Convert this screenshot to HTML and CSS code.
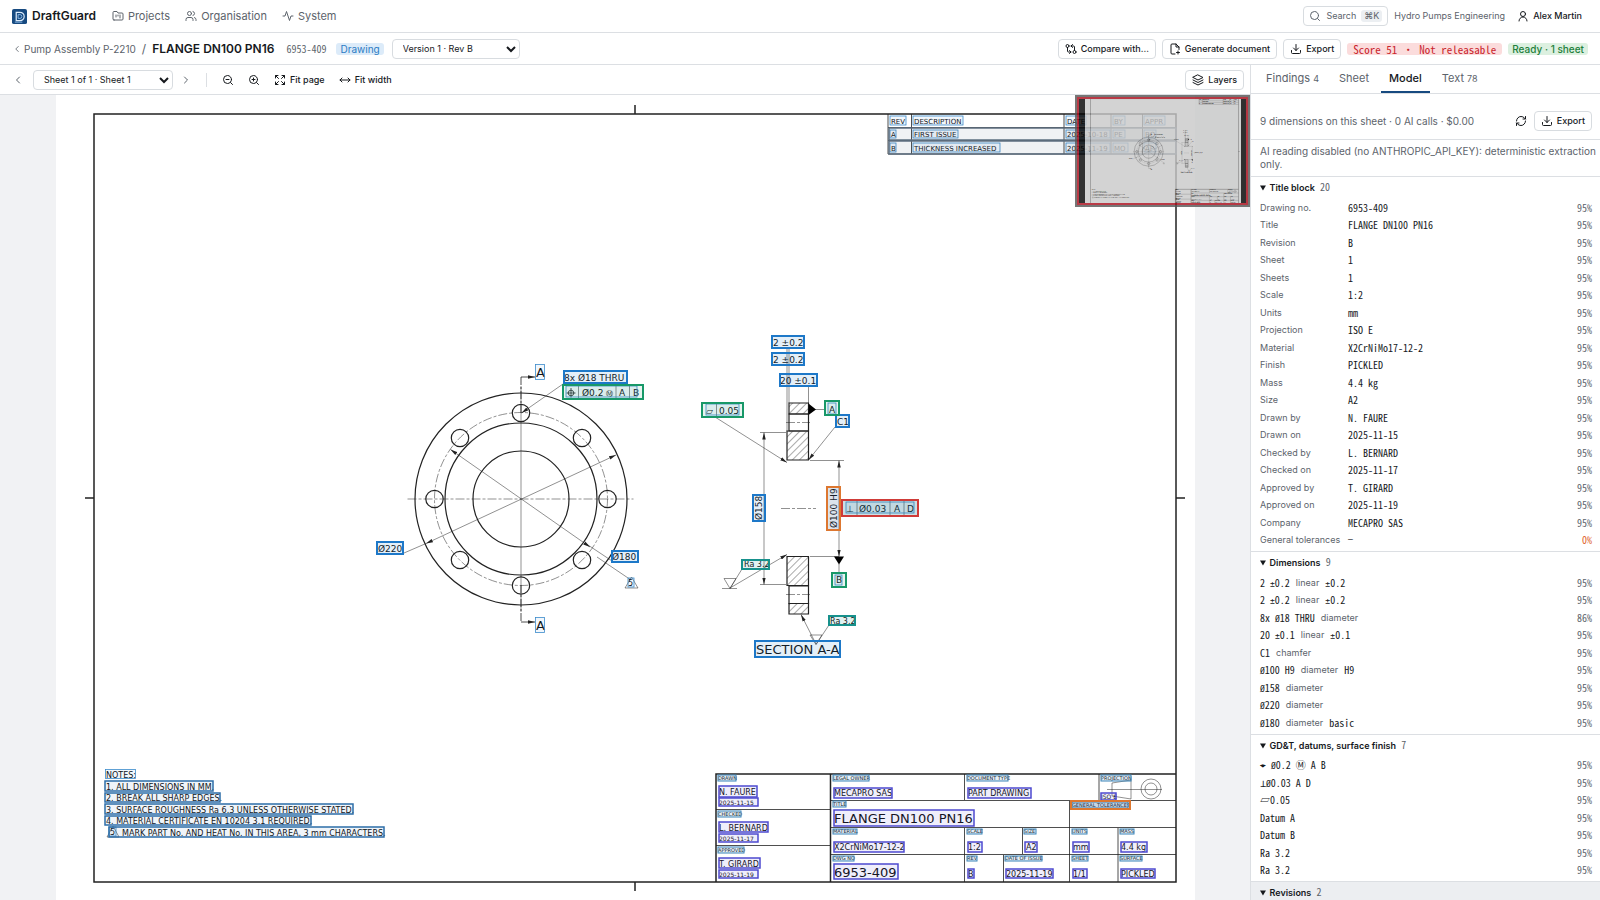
FILE: index.html
```html
<!DOCTYPE html>
<html lang="en">
<head>
<meta charset="utf-8">
<title>DraftGuard – FLANGE DN100 PN16</title>
<link rel="stylesheet" href="styles.css">
</head>
<body>
<header class="topbar">
  <a class="brand" href="#">
    <svg class="logo" viewBox="0 0 16 16"><rect width="16" height="16" rx="2" fill="#174a80"/><path d="M4.500 3.500h4a4.500 4.500 0 0 1 0 9h-4z" fill="none" stroke="#dcebfa" stroke-width="1.300"/><path d="M6.500 6h2a2 2 0 0 1 0 4h-2zM3 14h8" fill="none" stroke="#8dbbe8"/></svg>
    DraftGuard</a>
  <nav class="mainnav">
    <a href="#"><svg class="icon" viewBox="0 0 24 24"><path d="M4 20h16a2 2 0 0 0 2-2V8a2 2 0 0 0-2-2h-8l-2-3H4a2 2 0 0 0-2 2v13a2 2 0 0 0 2 2zM8 10v4M12 10v2M16 10v6"/></svg>Projects</a>
    <a href="#"><svg class="icon" viewBox="0 0 24 24"><path d="M16 21v-2a4 4 0 0 0-4-4H6a4 4 0 0 0-4 4v2M22 21v-2a4 4 0 0 0-3-3.900M16 3.100a4 4 0 0 1 0 7.800"/><circle cx="9" cy="7" r="4"/></svg>Organisation</a>
    <a href="#"><svg class="icon" viewBox="0 0 24 24"><path d="M22 12h-4l-3 9L9 3l-3 9H2"/></svg>System</a>
  </nav>
  <div class="account">
    <button class="btn search"><svg class="icon" viewBox="0 0 24 24"><circle cx="11" cy="11" r="8"/><path d="m21 21-4-4"/></svg>Search <kbd>⌘K</kbd></button>
    <span class="org">Hydro Pumps Engineering</span>
    <button class="user"><svg class="icon" viewBox="0 0 24 24"><circle cx="12" cy="8" r="5"/><path d="M4 22a8 8 0 0 1 16 0"/></svg>Alex Martin</button>
  </div>
</header>
<div class="docbar">
  <a class="back" href="#"><svg class="icon small" viewBox="0 0 24 24"><path d="m15 18-6-6 6-6"/></svg>Pump Assembly P-2210</a>
  <span class="slash">/</span>
  <h1>FLANGE DN100 PN16</h1>
  <span class="mono number">6953-409</span>
  <span class="badge blue">Drawing</span>
  <select class="version" aria-label="Version"><option>Version 1 · Rev B</option></select>
  <div class="docactions">
    <button class="btn"><svg class="icon" viewBox="0 0 24 24"><circle cx="5" cy="6" r="3"/><circle cx="19" cy="18" r="3"/><path d="M12 6h5a2 2 0 0 1 2 2v7M15 9l-3-3 3-3M12 18H7a2 2 0 0 1-2-2V9M9 15l3 3-3 3"/></svg>Compare with…</button>
    <button class="btn"><svg class="icon" viewBox="0 0 24 24"><path d="M12 22H6a2 2 0 0 1-2-2V4a2 2 0 0 1 2-2h8l6 6v5M14 2v6h6M18 16v6M15 19h6"/></svg>Generate document</button>
    <button class="btn"><svg class="icon" viewBox="0 0 24 24"><path d="M21 15v4a2 2 0 0 1-2 2H5a2 2 0 0 1-2-2v-4M7 10l5 5 5-5M12 15V3"/></svg>Export</button>
    <span class="badge red mono">Score 51 · Not releasable</span>
    <span class="badge green">Ready · 1 sheet</span>
  </div>
</div>
<main class="workspace">
  <section class="viewer">
    <div class="toolbar">
      <button class="ghost muted" aria-label="Previous sheet"><svg class="icon" viewBox="0 0 24 24"><path d="m15 18-6-6 6-6"/></svg></button>
      <select class="sheet" aria-label="Sheet"><option>Sheet 1 of 1 · Sheet 1</option></select>
      <button class="ghost muted" aria-label="Next sheet"><svg class="icon" viewBox="0 0 24 24"><path d="m9 18 6-6-6-6"/></svg></button>
      <span class="sep"></span>
      <button class="ghost zoom" aria-label="Zoom out"><svg class="icon" viewBox="0 0 24 24"><circle cx="11" cy="11" r="8"/><path d="m21 21-4-4M8 11h6"/></svg></button>
      <button class="ghost zoom" aria-label="Zoom in"><svg class="icon" viewBox="0 0 24 24"><circle cx="11" cy="11" r="8"/><path d="m21 21-4-4M8 11h6M11 8v6"/></svg></button>
      <button class="ghost"><svg class="icon" viewBox="0 0 24 24"><path d="m15 15 6 6M15 9l6-6M21 16v5h-5M21 8V3h-5M3 16v5h5M3 21l6-6M3 8V3h5M9 9 3 3"/></svg>Fit page</button>
      <button class="ghost"><svg class="icon" viewBox="0 0 24 24"><path d="m18 8 4 4-4 4M2 12h20M6 8l-4 4 4 4"/></svg>Fit width</button>
      <button class="btn layers"><svg class="icon" viewBox="0 0 24 24"><path d="m12 2 10 5-10 5L2 7zM2 12l10 5 10-5M2 17l10 5 10-5"/></svg>Layers</button>
    </div>
    <div class="canvas">
      <svg class="drawing" viewBox="0 95 1250 805" preserveAspectRatio="xMidYMin meet">
        <defs>
          <pattern id="hatch" width="5" height="5" patternUnits="userSpaceOnUse" patternTransform="rotate(45)"><path d="M0 0V5" stroke="#555" stroke-width="1"/></pattern>
          <marker id="tip" viewBox="0 0 8 4" refX="8" refY="2" markerWidth="7" markerHeight="4" markerUnits="userSpaceOnUse" orient="auto-start-reverse"><path d="M0 0 8 2 0 4z" fill="#222"/></marker>
        </defs>
        <rect x="56" y="95" width="1139" height="805" fill="#fff"/>
        <g id="plan">
          <g class="ln frame"><rect x="94" y="114" width="1082" height="768"/><path d="M635 105v9M635 882v9M85 498h9M1176 498h9"/></g>
          <!-- revision table -->
          <g class="ln mid"><path d="M888 114v40h288M888 127.500h288M888 140.500h288M911.500 114v40M1064 114v40M1111 114v40M1142.500 114v40"/></g>
          <g class="t7">
            <text x="891" y="124">REV</text><text x="914" y="124">DESCRIPTION</text><text x="1067" y="124">DATE</text><text x="1114" y="124">BY</text><text x="1145" y="124">APPR</text>
            <text x="891" y="137">A</text><text x="914" y="137">FIRST ISSUE</text><text x="1067" y="137">2025-10-18</text><text x="1114" y="137">PE</text><text x="1145" y="137">BO</text>
            <text x="891" y="151">B</text><text x="914" y="151">THICKNESS INCREASED</text><text x="1067" y="151">2025-11-19</text><text x="1114" y="151">MO</text><text x="1145" y="151">AP</text>
          </g>
          <!-- front view -->
          <g class="ln part"><circle cx="521" cy="499" r="106"/><circle cx="521" cy="499" r="76"/><circle cx="521" cy="499" r="48"/>
            <circle cx="521" cy="413" r="8.700"/><circle cx="582" cy="438" r="8.700"/><circle cx="607.500" cy="499" r="8.700"/><circle cx="582" cy="560" r="8.700"/><circle cx="521" cy="585.500" r="8.700"/><circle cx="460" cy="560" r="8.700"/><circle cx="434.500" cy="499" r="8.700"/><circle cx="460" cy="438" r="8.700"/></g>
          <g class="ln thin"><circle class="dash" cx="521" cy="499" r="86.500"/><path class="dash" d="M407.500 499h226"/><path d="M521 386v226"/>
            <path marker-end="url(#tip)" d="M563 384 521.500 413"/><path d="M404 553l22-9.500"/><path marker-start="url(#tip)" marker-end="url(#tip)" d="M426 543.500 616 455"/><path marker-start="url(#tip)" marker-end="url(#tip)" d="M450.500 449.500 590 547"/><path d="M585 543l27 18M597 557l34 23"/><path d="m631.500 577 6.500 11h-13z"/></g>
          <g class="ln mid"><path stroke-dasharray="8 2 2 2" d="M521 377v36M521 585v37"/><path marker-end="url(#tip)" d="M521 377h14"/><path marker-end="url(#tip)" d="M521 622h14"/></g>
          <!-- section view -->
          <g class="ln part"><path fill="url(#hatch)" d="M789 403h19.500v11H789z"/><path d="M789 414h19.500v17H789z"/><path fill="url(#hatch)" d="M787 431h21.500v29H787zM787 556.500h21.500v29H787z"/><path d="M789 586h19.500v17.500H789z"/><path fill="url(#hatch)" d="M789 603.500h19.500V614H789z"/></g>
          <g class="ln thin"><path d="M787 347v84M789 347v56M808.500 386v17M760 432.500h26M760 584.500h26M810 460.500h34M810 556.500h29M815 409.500h10M839 564v8"/>
            <path class="dash" d="M786 422.500h24M786 594.500h24M781 508.500h35"/>
            <path marker-start="url(#tip)" marker-end="url(#tip)" d="M764 432.500v152"/><path marker-start="url(#tip)" marker-end="url(#tip)" d="M839 460.500v96"/>
            <path marker-end="url(#tip)" d="M835 427 808.500 460"/><path marker-end="url(#tip)" d="M715 417 787 462.500"/><path marker-end="url(#tip)" d="M730 588 787 554.500"/><path marker-end="url(#tip)" d="M816 644 801 614.500"/>
            <path d="M742 569l-12 19.500-6-10h12l-6 10M722 588.500h15M829 625l-13 19.500-6-9.500h12l-6 9.500"/></g>
          <path d="M808.500 403.500v11.500l7.500-5.500zM834 556.500h10l-5 8z"/>
          <g class="t9">
            <text x="564" y="381">8x Ø18 THRU</text><text x="378" y="552">Ø220</text><text x="612" y="560">Ø180</text>
            <text x="582" y="396">Ø0.2</text><text x="606" y="396" class="t7">Ⓜ</text><text x="619" y="396">A</text><text x="633" y="396">B</text>
            <text x="773" y="346">2 ±0.2</text><text x="773" y="363">2 ±0.2</text><text x="780" y="384">20 ±0.1</text>
            <text x="829" y="413">A</text><text x="837" y="425">C1</text><text x="706" y="414">▱</text><text x="719" y="414">0.05</text>
            <text x="846" y="512">⊥</text><text x="859" y="512">Ø0.03</text><text x="894" y="512">A</text><text x="907" y="512">D</text><text x="836" y="583">B</text>
            <text transform="translate(762 520) rotate(-90)">Ø158</text><text transform="translate(837 528) rotate(-90)">Ø100 H9</text>
          </g>
          <g class="ln mid"><circle cx="571" cy="393" r="2.800"/><path d="M571 388v9.500M566.500 393h9"/></g>
          <g class="ln thin"><path d="M578.500 386v12M616 386v12M629.500 386v12M716.500 404v12M857 501v14M890 501v14M904 501v14"/></g>
          <g class="t8"><text x="744" y="567">Ra 3.2</text><text x="830" y="624">Ra 3.2</text><text x="628" y="586">5</text></g>
          <g class="t13"><text x="536" y="377">A</text><text x="536" y="630">A</text><text x="756" y="654">SECTION A-A</text><text x="834" y="823">FLANGE DN100 PN16</text><text x="834" y="877">6953-409</text></g>
          <!-- notes -->
          <g class="t8">
            <text x="106" y="778">NOTES:</text><text x="106" y="790">1. ALL DIMENSIONS IN MM.</text><text x="106" y="801">2. BREAK ALL SHARP EDGES.</text><text x="106" y="813">3. SURFACE ROUGHNESS Ra 6.3 UNLESS OTHERWISE STATED.</text><text x="106" y="824">4. MATERIAL CERTIFICATE EN 10204 3.1 REQUIRED.</text><text x="122" y="836">MARK PART No. AND HEAT No. IN THIS AREA, 3 mm CHARACTERS.</text><text x="110" y="835">5</text>
          </g>
          <path class="ln thin" d="m113 826 6 11h-12z"/>
          <!-- title block -->
          <g class="ln frame"><path d="M716 882V774h460M830.500 774v108"/></g>
          <g class="ln mid"><path d="M716 809.500h114M716 845.500h114M830 800.500h346M830 827.500h346M830 854.500h346M964.500 774v26M964.500 828v54M1099 774v26M1069.500 801v81M1022.500 828v26M1003.500 855v27M1118 828v54"/></g>
          <g class="ln thin"><path d="M1112 783v13l19 3v-19zM1107 789.500h55"/><circle cx="1151" cy="789" r="10"/><circle cx="1151" cy="789" r="6"/></g>
          <g class="t5">
            <text x="718" y="780">DRAWN</text><text x="718" y="816">CHECKED</text><text x="718" y="852">APPROVED</text>
            <text x="833" y="780">LEGAL OWNER</text><text x="833" y="806">TITLE</text><text x="833" y="833">MATERIAL</text><text x="833" y="860">DWG NO</text>
            <text x="967" y="780">DOCUMENT TYPE</text><text x="1101" y="780">PROJECTION</text><text x="1072" y="807">GENERAL TOLERANCES</text>
            <text x="967" y="833">SCALE</text><text x="1024" y="833">SIZE</text><text x="1072" y="833">UNITS</text><text x="1120" y="833">MASS</text>
            <text x="967" y="860">REV</text><text x="1005" y="860">DATE OF ISSUE</text><text x="1072" y="860">SHEET</text><text x="1120" y="860">SURFACE</text>
          </g>
          <g class="t6"><text x="719" y="805">2025-11-15</text><text x="719" y="841">2025-11-17</text><text x="719" y="877">2025-11-19</text><text x="1101" y="799">ISO E</text></g>
          <g class="t8">
            <text x="719" y="795">N. FAURE</text><text x="719" y="831">L. BERNARD</text><text x="719" y="867">T. GIRARD</text>
            <text x="834" y="796">MECAPRO SAS</text><text x="834" y="850">X2CrNiMo17-12-2</text><text x="968" y="796">PART DRAWING</text>
            <text x="968" y="850">1:2</text><text x="1026" y="850">A2</text><text x="1073" y="850">mm</text><text x="1121" y="850">4.4 kg</text>
            <text x="968" y="877">B</text><text x="1006" y="877">2025-11-19</text><text x="1073" y="877">1/1</text><text x="1121" y="877">PICKLED</text>
          </g>
        </g>
        <!-- recognised text -->
        <g class="word">
          <rect x="890" y="116" width="16" height="9"/><rect x="913" y="116" width="50" height="9"/><rect x="1066" y="116" width="20" height="9"/><rect x="1113" y="116" width="12" height="9"/><rect x="1144" y="116" width="21" height="9"/>
          <rect x="890" y="130" width="6" height="8"/><rect x="913" y="130" width="45" height="8"/><rect x="1066" y="130" width="44" height="8"/><rect x="1113" y="130" width="12" height="8"/><rect x="1144" y="130" width="12" height="8"/>
          <rect x="890" y="143" width="6" height="9"/><rect x="913" y="143" width="87" height="9"/><rect x="1066" y="143" width="44" height="9"/><rect x="1113" y="143" width="15" height="9"/><rect x="1144" y="143" width="12" height="9"/>
          <rect x="535.500" y="364.500" width="9" height="15"/><rect x="535.500" y="617.500" width="9" height="15"/>
          <rect x="628" y="578" width="6" height="9"/><rect x="105.500" y="769.500" width="30" height="9"/><rect x="566" y="386" width="71" height="11"/><rect x="846" y="502" width="68" height="11"/><rect x="706" y="404" width="33" height="11"/><rect x="828" y="403" width="8" height="11"/><rect x="835" y="575" width="7" height="10"/><rect x="109" y="827" width="7" height="9"/>
        </g>
        <g class="label">
          <rect x="718" y="775" width="18" height="6"/><rect x="718" y="811" width="23" height="6"/><rect x="718" y="847" width="26" height="6"/><rect x="833" y="775" width="36" height="6"/><rect x="833" y="801" width="13" height="6"/><rect x="833" y="829" width="24" height="5"/><rect x="833" y="856" width="21" height="5"/>
          <rect x="967" y="775" width="41" height="6"/><rect x="1101" y="775" width="30" height="6"/><rect x="1072" y="802" width="56" height="6"/><rect x="967" y="829" width="15" height="5"/><rect x="1024" y="829" width="12" height="5"/><rect x="1072" y="829" width="15" height="5"/><rect x="1120" y="829" width="14" height="5"/>
          <rect x="967" y="856" width="10" height="5"/><rect x="1005" y="856" width="37" height="5"/><rect x="1072" y="856" width="16" height="5"/><rect x="1120" y="856" width="22" height="5"/>
        </g>
        <!-- extracted features -->
        <g class="revrow"><rect x="889" y="128" width="287" height="12"/><rect x="889" y="141" width="287" height="13"/></g>
        <g class="note"><rect x="105" y="781" width="108" height="10"/><rect x="105" y="793" width="115" height="9"/><rect x="105" y="804" width="248" height="10"/><rect x="105" y="816" width="206" height="9"/><rect x="109" y="827" width="275" height="10"/></g>
        <g class="dim">
          <rect x="564" y="371" width="63" height="12"/><rect x="377" y="542" width="26" height="12"/><rect x="612" y="551" width="26" height="11"/>
          <rect x="772" y="336" width="32" height="12"/><rect x="772" y="353" width="32" height="12"/><rect x="780" y="374" width="37" height="12"/><rect x="836" y="415" width="13" height="12"/><rect x="753" y="495" width="12" height="26"/><rect x="755" y="641" width="85" height="16"/>
        </g>
        <g class="gdt"><rect x="563" y="385" width="80" height="14"/><rect x="702" y="403" width="41" height="14"/><rect x="825" y="401" width="14" height="14"/><rect x="832" y="573" width="14" height="14"/></g>
        <g class="rough"><rect x="742" y="560" width="27" height="9"/><rect x="829" y="616" width="26" height="9"/></g>
        <g class="field">
          <rect x="719" y="786" width="38" height="11"/><rect x="719" y="798" width="39" height="8"/><rect x="719" y="822" width="49" height="10"/><rect x="719" y="834" width="39" height="8"/><rect x="719" y="858" width="41" height="10"/><rect x="719" y="870" width="39" height="8"/>
          <rect x="834" y="788" width="58" height="10"/><rect x="834" y="810" width="140" height="16"/><rect x="834" y="842" width="70" height="10"/><rect x="834" y="864" width="64" height="15"/>
          <rect x="968" y="788" width="63" height="10"/><rect x="1101" y="793" width="15" height="7"/><rect x="968" y="842" width="14" height="10"/><rect x="1025" y="842" width="12" height="10"/><rect x="1073" y="842" width="16" height="10"/><rect x="1121" y="842" width="26" height="10"/>
          <rect x="968" y="869" width="6" height="9"/><rect x="1006" y="869" width="47" height="9"/><rect x="1073" y="869" width="14" height="9"/><rect x="1121" y="869" width="34" height="9"/>
        </g>
        <g class="warn"><rect x="827" y="487" width="13" height="43"/><rect x="1071" y="801" width="59" height="8"/></g>
        <rect class="error" x="842" y="500" width="76" height="16"/>
      </svg>
      <svg class="minimap" viewBox="0 0 175 112">
        <rect width="175" height="112" fill="#000"/><rect x="10" y="2" width="156" height="108" fill="#c9c9c9"/>
        <use href="#plan" transform="translate(2.300 -11.700) scale(.137)"/>
        <use href="#plan" transform="translate(2.300 -11.700) scale(.137)"/>
        <rect x="1" y="1" width="173" height="110" fill="none" stroke="#555" stroke-width="2"/>
        <rect x="3" y="3" width="169" height="106" fill="none" stroke="#a80a18" stroke-width="2"/>
      </svg>
    </div>
  </section>
  <aside class="panel">
    <nav class="tabs"><button>Findings <small>4</small></button><button>Sheet</button><button class="active">Model</button><button>Text <small>78</small></button></nav>
    <div class="summaryrow"><span>9 dimensions on this sheet · 0 AI calls · $0.00</span>
      <button class="ghost refresh" aria-label="Refresh"><svg class="icon" viewBox="0 0 24 24"><path d="M3 12a9 9 0 0 1 9-9 10 10 0 0 1 7 3l2 2M21 3v5h-5M21 12a9 9 0 0 1-9 9 10 10 0 0 1-7-3l-2-2M8 16H3v5"/></svg></button>
      <button class="btn"><svg class="icon" viewBox="0 0 24 24"><path d="M21 15v4a2 2 0 0 1-2 2H5a2 2 0 0 1-2-2v-4M7 10l5 5 5-5M12 15V3"/></svg>Export</button></div>
    <p class="notice">AI reading disabled (no ANTHROPIC_API_KEY): deterministic extraction only.</p>
    <details open><summary>Title block <span class="mono">20</span></summary>
      <dl class="fields">
        <div><dt>Drawing no.</dt><dd>6953-409</dd><dd>95%</dd></div>
        <div><dt>Title</dt><dd>FLANGE DN100 PN16</dd><dd>95%</dd></div>
        <div><dt>Revision</dt><dd>B</dd><dd>95%</dd></div>
        <div><dt>Sheet</dt><dd>1</dd><dd>95%</dd></div>
        <div><dt>Sheets</dt><dd>1</dd><dd>95%</dd></div>
        <div><dt>Scale</dt><dd>1:2</dd><dd>95%</dd></div>
        <div><dt>Units</dt><dd>mm</dd><dd>95%</dd></div>
        <div><dt>Projection</dt><dd>ISO E</dd><dd>95%</dd></div>
        <div><dt>Material</dt><dd>X2CrNiMo17-12-2</dd><dd>95%</dd></div>
        <div><dt>Finish</dt><dd>PICKLED</dd><dd>95%</dd></div>
        <div><dt>Mass</dt><dd>4.4 kg</dd><dd>95%</dd></div>
        <div><dt>Size</dt><dd>A2</dd><dd>95%</dd></div>
        <div><dt>Drawn by</dt><dd>N. FAURE</dd><dd>95%</dd></div>
        <div><dt>Drawn on</dt><dd>2025-11-15</dd><dd>95%</dd></div>
        <div><dt>Checked by</dt><dd>L. BERNARD</dd><dd>95%</dd></div>
        <div><dt>Checked on</dt><dd>2025-11-17</dd><dd>95%</dd></div>
        <div><dt>Approved by</dt><dd>T. GIRARD</dd><dd>95%</dd></div>
        <div><dt>Approved on</dt><dd>2025-11-19</dd><dd>95%</dd></div>
        <div><dt>Company</dt><dd>MECAPRO SAS</dd><dd>95%</dd></div>
        <div><dt>General tolerances</dt><dd class="sym">—</dd><dd class="low">0%</dd></div>
      </dl>
    </details>
    <details open><summary>Dimensions <span class="mono">9</span></summary>
      <ul class="items">
        <li><b>2 <u class="sym">±</u>0.2</b><span>linear</span><b><u class="sym">±</u>0.2</b><i>95%</i></li>
        <li><b>2 <u class="sym">±</u>0.2</b><span>linear</span><b><u class="sym">±</u>0.2</b><i>95%</i></li>
        <li><b>8x <u class="sym">Ø</u>18 THRU</b><span>diameter</span><i>86%</i></li>
        <li><b>20 <u class="sym">±</u>0.1</b><span>linear</span><b><u class="sym">±</u>0.1</b><i>95%</i></li>
        <li><b>C1</b><span>chamfer</span><i>95%</i></li>
        <li><b><u class="sym">Ø</u>100 H9</b><span>diameter</span><b>H9</b><i>95%</i></li>
        <li><b><u class="sym">Ø</u>158</b><span>diameter</span><i>95%</i></li>
        <li><b><u class="sym">Ø</u>220</b><span>diameter</span><i>95%</i></li>
        <li><b><u class="sym">Ø</u>180</b><span>diameter</span><b>basic</b><i>95%</i></li>
      </ul>
    </details>
    <details open><summary>GD&amp;T, datums, surface finish <span class="mono">7</span></summary>
      <ul class="items">
        <li><b>⌖ <u class="sym">Ø</u>0.2 Ⓜ A B</b><i>95%</i></li>
        <li><b>⟂<u class="sym">Ø</u>0.03 A D</b><i>95%</i></li>
        <li><b>▱0.05</b><i>95%</i></li>
        <li><b>Datum A</b><i>95%</i></li>
        <li><b>Datum B</b><i>95%</i></li>
        <li><b>Ra 3.2</b><i>95%</i></li>
        <li><b>Ra 3.2</b><i>95%</i></li>
      </ul>
    </details>
    <details open class="hovered"><summary>Revisions <span class="mono">2</span></summary></details>
  </aside>
</main>
</body>
</html>
```

FILE: styles.css
```css
* { box-sizing: border-box; }
body { margin: 0; height: 100vh; display: flex; flex-direction: column; overflow: hidden; background: #fff; color: #16191d; font: 10px/16px Inter, sans-serif; }
button, select { font: inherit; color: inherit; }
a { color: inherit; text-decoration: none; }
.mono, .fields dd, .items b, .items i { font-family: "Noto Sans Mono CJK SC", "Noto Sans Mono CJK JP", "Liberation Mono", monospace; }
.icon { width: 12px; height: 12px; flex: none; fill: none; stroke: currentColor; stroke-width: 2; stroke-linecap: round; stroke-linejoin: round; }
.icon.small { width: 10px; height: 10px; }

.topbar { display: flex; align-items: center; height: 33px; flex: none; padding: 0 12px; border-bottom: 1px solid #dcdfe3; }
.brand { display: flex; align-items: center; gap: 5px; font-size: 12px; font-weight: 600; }
.logo { width: 15px; height: 15px; }
.mainnav { display: flex; gap: 15px; margin-left: 16px; font-size: 11px; color: #5c636b; }
.mainnav a { display: flex; align-items: center; gap: 4px; }
.account { display: flex; align-items: center; gap: 6px; margin-left: auto; font-size: 9px; color: #5c636b; }
.btn { display: flex; align-items: center; gap: 4px; height: 20px; padding: 0 6px; background: #fff; border: 1px solid #d8dce0; border-radius: 4px; font-size: 9px; font-weight: 500; white-space: nowrap; }
.search { gap: 5px; padding: 0 5px; font-weight: 400; }
kbd { padding: 0 3px; border-radius: 3px; background: #eceff2; font: 9px/12px Inter, sans-serif; }
.user { display: flex; align-items: center; gap: 4px; padding: 0 6px; border: 0; background: none; color: #16191d; font-weight: 500; }

.docbar { display: flex; align-items: center; height: 32px; flex: none; padding: 0 12px; border-bottom: 1px solid #dcdfe3; }
.back { display: flex; align-items: center; gap: 2px; color: #5c636b; }
.slash { margin: 0 6px; font-size: 12px; color: #5c636b; }
h1 { margin: 0 12px 0 0; font-size: 12px; font-weight: 600; }
.number { color: #5c636b; }
.badge { padding: 0 4px; border-radius: 3px; line-height: 12px; font-weight: 500; white-space: nowrap; }
.blue { margin: 0 8px 0 10px; background: #dcebf9; color: #2b7bc4; font-weight: 400; }
.red { padding: 0 6px; background: #fbdcdc; color: #c9252d; font-size: 11px; }
.green { background: #dcf0e0; color: #23803c; }
select { height: 20px; padding: 0 6px; background: #fff; border: 1px solid #d8dce0; border-radius: 4px; font-size: 9px; }
.version { width: 128px; }
.sheet { width: 140px; }
.docactions { display: flex; align-items: center; gap: 6px; margin-left: auto; }

.workspace { display: flex; flex: 1; min-height: 0; }
.viewer { display: flex; flex-direction: column; flex: 1; min-width: 0; }
.toolbar { display: flex; align-items: center; height: 30px; flex: none; padding: 0 6px; border-bottom: 1px solid #dcdfe3; }
.ghost { display: flex; align-items: center; gap: 4px; height: 20px; padding: 0 7px; border: 0; background: none; font-size: 9px; font-weight: 500; white-space: nowrap; }
.muted { color: #5c636b; }
.muted:first-child { padding: 0 9px 0 6px; }
.sep { width: 1px; height: 14px; margin: 0 8px 0 7px; background: #dcdfe3; }
.layers { margin-left: auto; }
.canvas { position: relative; flex: 1; min-height: 0; overflow: hidden; background: #f1f2f4; }
.drawing { display: block; width: 100%; height: 100%; }
.minimap { position: absolute; top: 0; right: 0; width: 175px; height: 112px; opacity: .8; }

#plan text { font-family: "DejaVu Sans", sans-serif; fill: #111; }
.t5 { font-size: 5px; } .t6 { font-size: 6px; } .t7 { font-size: 7px; } .t8 { font-size: 8px; } .t9 { font-size: 9px; } .t13 { font-size: 13px; }
.ln { fill: none; stroke: #222; }
.frame { stroke-width: 1.5; }
.part { stroke-width: 1.2; }
.mid { stroke-width: .8; }
.thin { stroke-width: .5; }
.dash { stroke-dasharray: 9 2 3 2; }
.word { fill: rgb(30 120 200 / .06); stroke: #3b8acb; stroke-width: .8; }
.label { fill: rgb(30 120 200 / .12); stroke: #3b84b8; }
.revrow { fill: rgb(60 90 120 / .08); stroke: #5d6f80; stroke-width: 1.5; }
.note { fill: rgb(30 100 170 / .07); stroke: #2d6da8; stroke-width: 1.5; }
.dim { fill: rgb(30 120 200 / .12); stroke: #1d78c8; stroke-width: 2; }
.gdt { fill: rgb(20 150 100 / .1); stroke: #189868; stroke-width: 2; }
.rough { fill: rgb(20 140 140 / .12); stroke: #17918c; stroke-width: 2; }
.field { fill: rgb(80 70 210 / .09); stroke: #4d49cf; stroke-width: 1.5; }
.warn { fill: rgb(60 100 150 / .18); stroke: #dd7730; stroke-width: 2; }
.error { fill: rgb(20 110 130 / .22); stroke: #cf3b38; stroke-width: 2; }

.panel { width: 350px; flex: none; overflow: hidden; border-left: 1px solid #dcdfe3; }
.tabs { display: flex; gap: 4px; height: 29px; padding: 0 7px; border-bottom: 1px solid #dcdfe3; }
.tabs button { padding: 0 8px; border: 0; border-bottom: 2px solid transparent; background: none; font-size: 11px; color: #5c636b; white-space: nowrap; }
.tabs small { font: 9px/16px Inter, sans-serif; }
.tabs .active { border-color: #174a80; color: #16191d; font-weight: 500; }
.summaryrow { display: flex; align-items: center; height: 46px; padding: 8px 8px 0 9px; border-bottom: 1px solid #dcdfe3; font-size: 10px; color: #5c636b; }
.summaryrow .refresh { margin-left: auto; color: #16191d; }
.summaryrow .btn { color: #16191d; }
.notice { margin: 0; padding: 5px 0 5px 9px; border-bottom: 1px solid #dcdfe3; line-height: 13px; color: #5c636b; }
details { padding-bottom: 2px; border-bottom: 1px solid #dcdfe3; }
summary { padding: 0 9px; font-size: 9px; line-height: 22px; font-weight: 600; }
summary .mono { margin-left: 3px; font-size: 10px; line-height: 16px; font-weight: 400; color: #5c636b; }
.fields, .items { margin: 0; padding: 0 8px 0 9px; list-style: none; font-size: 10px; color: #5c636b; }
.fields div { display: grid; grid-template-columns: 80px 1fr auto; column-gap: 8px; height: 1.75em; align-items: center; white-space: nowrap; }
.fields dt, .items span { font-size: 9px; }
.fields dd { margin: 0; color: #16191d; }
.fields dd:last-child { color: #5c636b; }
.fields dd.low { color: #e0622a; }
.items li { display: flex; gap: 6px; height: 1.75em; align-items: center; }
.items b { font-weight: 400; color: #16191d; }
.items i { margin-left: auto; font-style: normal; }
.items .sym, .fields .sym { font-family: "DejaVu Sans Mono", monospace; font-size: 8px; line-height: 10px; text-decoration: none; }
.hovered { background: #eceef1; }
```
